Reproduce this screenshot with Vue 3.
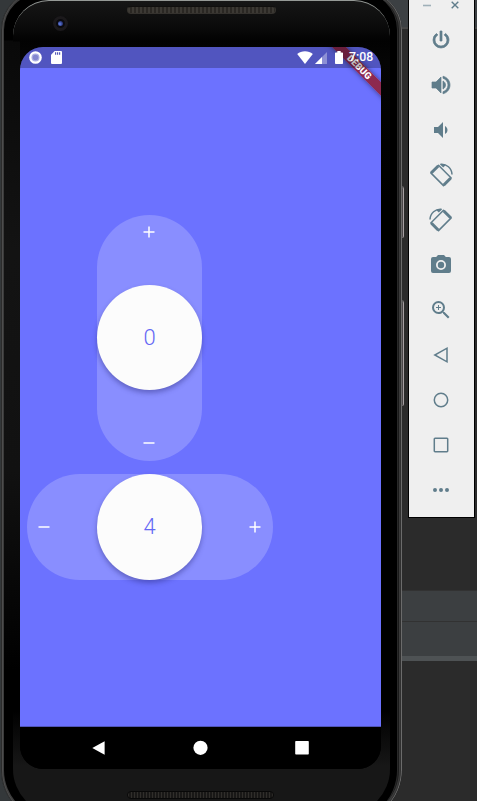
<script setup>
import { ref } from 'vue'

const vertical = ref(0)
const horizontal = ref(4)

const tools = [
  { name: 'power', d: 'M16.56 5.44l-1.45 1.45A5.97 5.97 0 0 1 18 12a6 6 0 0 1-12 0c0-2.17 1.16-4.06 2.88-5.12L7.44 5.44A7.96 7.96 0 0 0 4 12a8 8 0 0 0 16 0c0-2.72-1.36-5.12-3.44-6.56M13 3h-2v10h2z', heavy: true },
  { name: 'volume-up', d: 'M14 3.23v2.06c2.89.86 5 3.54 5 6.71s-2.11 5.84-5 6.7v2.07c4-.91 7-4.49 7-8.77s-3-7.86-7-8.77M16.5 12c0-1.77-1-3.29-2.5-4.03v8.05c1.5-.73 2.5-2.25 2.5-4.02M3 9v6h4l5 5V4L7 9H3z', heavy: true },
  { name: 'volume-down', d: 'M5 9v6h4l5 5V4L9 9H5zm13.5 3c0-1.77-1-3.29-2.5-4.03v8.05c1.5-.73 2.5-2.25 2.5-4.02z' },
  { name: 'rotate-left', turn: true },
  { name: 'rotate-right', turn: true, mirror: true },
  { name: 'camera', d: 'M9 2 7.17 4H4a2 2 0 0 0-2 2v12a2 2 0 0 0 2 2h16a2 2 0 0 0 2-2V6a2 2 0 0 0-2-2h-3.17L15 2H9zm3 5a5 5 0 1 1 0 10 5 5 0 0 1 0-10zm0 1.8a3.2 3.2 0 1 0 0 6.4 3.2 3.2 0 0 0 0-6.4z' },
  { name: 'zoom', d: 'M15.5 14h-.79l-.28-.27A6.47 6.47 0 0 0 16 9.5 6.5 6.5 0 1 0 9.5 16c1.61 0 3.09-.59 4.23-1.57l.27.28v.79l5 4.99L20.49 19l-4.99-5zm-6 0a4.5 4.5 0 1 1 0-9 4.5 4.5 0 0 1 0 9zM12 10h-2v2H9v-2H7V9h2V7h1v2h2v1z' },
  { name: 'back', line: 'M18 5.2v13.6L5.8 12z' },
  { name: 'home', line: 'M12 5.3a6.7 6.7 0 1 1 0 13.4a6.7 6.7 0 0 1 0-13.4z' },
  { name: 'overview', line: 'M6 5.3h12a.7.7 0 0 1 .7.7v12a.7.7 0 0 1-.7.7H6a.7.7 0 0 1-.7-.7V6a.7.7 0 0 1 .7-.7z' },
  { name: 'more', d: 'M6 10a2 2 0 1 0 0 4 2 2 0 0 0 0-4zm6 0a2 2 0 1 0 0 4 2 2 0 0 0 0-4zm6 0a2 2 0 1 0 0 4 2 2 0 0 0 0-4z' },
]
</script>

<template>
  <div class="desktop">
    <div class="editor">
      <div class="editor-tabs"></div>
      <div class="editor-code"></div>
      <div class="editor-pane"></div>
      <div class="editor-pane second"></div>
      <div class="editor-strip"></div>
    </div>

    <div class="phone-area">
      <div class="side-key power-key"></div>
      <div class="side-key volume-key"></div>
      <div class="phone">
        <div class="face">
          <header class="forehead">
            <span class="lens"><i></i></span>
            <span class="speaker"></span>
          </header>

          <div class="screen">
            <div class="ribbon">DEBUG</div>
            <div class="status">
              <svg class="st-circle" viewBox="0 0 14 14"><circle cx="7" cy="7" r="6.8" fill="#fff" /><circle cx="7" cy="7" r="4.3" fill="#aeb0e2" /><circle cx="7" cy="7" r="3" fill="#8487d0" /></svg>
              <svg class="st-card" viewBox="0 0 11 13"><path d="M3.7 0H10a1 1 0 0 1 1 1v11a1 1 0 0 1-1 1H1a1 1 0 0 1-1-1V3.7z" fill="#fff" /><path d="M4 1.3h1.2v2.4H4zM6 1.3h1.2v2.4H6zM8 1.3h1.2v2.4H8z" fill="#5558b8" /></svg>
              <span class="grow"></span>
              <svg class="st-wifi" viewBox="0 0 16 13"><path d="M8 13 .2 2.9C2.4 1.2 5 .3 8 .3s5.600.9 7.800 2.600z" fill="#fff" /></svg>
              <svg class="st-cell" viewBox="0 0 12 12"><path d="M12 0v12H0z" fill="#fff" opacity=".35" /><path d="M7 5v7H0z" fill="#fff" /></svg>
              <svg class="st-battery" viewBox="0 0 8 13"><path d="M2.300 0h3.400v1.400H7.200q.8 0 .8.800v10q0 .8-.8.800H.8q-.8 0-.8-.8v-10q0-.8.8-.8h1.500z" fill="#fff" /></svg>
              <span class="time">7:08</span>
            </div>

            <main class="app">
              <div class="stepper tall">
                <svg class="sign" viewBox="0 0 12 12"><path d="M.5 6h11M6 .5v11" /></svg>
                <div class="knob">{{ vertical }}</div>
                <svg class="sign" viewBox="0 0 12 12"><path d="M.5 6h11" /></svg>
              </div>
              <div class="stepper wide">
                <svg class="sign" viewBox="0 0 12 12"><path d="M.5 6h11" /></svg>
                <div class="knob">{{ horizontal }}</div>
                <svg class="sign" viewBox="0 0 12 12"><path d="M.5 6h11M6 .5v11" /></svg>
              </div>
            </main>

            <nav class="nav">
              <svg viewBox="0 0 14 14"><path d="M12.600.200v13.600L.3 7z" /></svg>
              <svg viewBox="0 0 14 14"><circle cx="6.500" cy="6.800" r="7.100" /></svg>
              <svg viewBox="0 0 14 14"><rect x=".2" width="13.600" height="13.600" rx=".8" /></svg>
            </nav>
          </div>

          <footer class="chin"><span class="speaker bottom"></span></footer>
        </div>
      </div>
    </div>

    <aside class="toolbar">
      <div class="window-buttons">
        <svg viewBox="0 0 8 8"><path d="M0 4.500h8" stroke="#9fb0b8" stroke-width="1.600" /></svg>
        <svg viewBox="0 0 8 8"><path d="M.7.7l6.600 6.600M7.300.7L.7 7.300" stroke="#607d8b" stroke-width="1.400" /></svg>
      </div>
      <div v-for="tool in tools" :key="tool.name" class="tool">
        <svg viewBox="0 0 24 24" :class="{ heavy: tool.heavy, mirror: tool.mirror }">
          <template v-if="tool.turn">
            <path class="outline" d="M9.500 2.300 22.200 15 14.500 22.600 1.800 9.900z" stroke-linejoin="round" />
            <path class="outline thick" d="M9.200 3 2.400 9.700M21.500 15.300 14.800 22" />
            <path class="outline" d="M11.500 1.300C17.500.7 22.800 5 23 11.500" />
            <path d="M10.800 1.300 15 .9 16.500 2.200 14.200 4.500z" />
          </template>
          <path v-else-if="tool.d" :d="tool.d" fill-rule="evenodd" />
          <path v-else :d="tool.line" class="outline" />
        </svg>
      </div>
    </aside>
  </div>
</template>

<style>
body {
  margin: 0;
  overflow: hidden;
}
</style>

<style scoped>
.desktop {
  display: grid;
  grid-template-columns: 402px 6px 67px 2px;
  grid-template-rows: 801px;
  width: 477px;
  height: 801px;
  overflow: hidden;
  background: #2b2b2b;
  font-family: Roboto, sans-serif;
}
.editor {
  grid-area: 1 / 1 / 2 / 5;
  display: flex;
  flex-direction: column;
}
.editor-tabs {
  height: 27px;
  background: #3c4043;
  border-bottom: 2px solid #464646;
}
.editor-code {
  height: 561px;
}
.editor-pane {
  height: 30px;
  background: #3c3f41;
  border-top: 1px solid #323232;
}
.editor-pane.second {
  height: 34px;
}
.editor-strip {
  height: 5px;
  background: #4e5254;
}
.phone-area {
  grid-area: 1 / 1 / 2 / 3;
  position: relative;
  height: 801px;
  background: linear-gradient(90deg, #34383a 20px, transparent 20px);
}
.side-key {
  position: absolute;
  left: 400px;
  width: 4px;
  box-sizing: border-box;
  background: #4a4648;
  border-right: 1px solid #a59fa1;
  border-top: 3px solid #555;
  border-radius: 0 2px 2px 0;
}
.power-key {
  top: 186px;
  height: 52px;
}
.volume-key {
  top: 300px;
  height: 106px;
}
.phone {
  position: relative;
  box-sizing: border-box;
  width: 401px;
  height: 831px;
  margin: -9px 0 0 1px;
  padding: 9px 12px 0;
  border-radius: 39px 39px 52px 52px;
  background:
    linear-gradient(transparent 49px, #090909 50px, #131313 260px, #111 480px, #000 680px) 0 0 / 12px 100% no-repeat,
    #000;
  box-shadow: inset -1px 0 0 #6b6b6b, inset 1px 0 0 #2c2c2c, inset -2px 0 0 #303030, inset 2px 0 0 #4d4d4d, inset 0 0 0 3px #3b3b3b, inset -4px 0 0 #1b1b1b, inset -5px 0 0 #292929;
}
.face {
  box-sizing: border-box;
  height: 815px;
  border-radius: 36px 36px 46px 46px;
  border-top: 1px solid #969a97;
  background:
    linear-gradient(transparent 40px, #090909 41px, #131313 250px, #111 470px, transparent 670px) 0 0 / 7px 100% no-repeat,
    linear-gradient(#161616, #0b0b0b 25px, #020202 40px, #050505 60px, #000 200px, #000 710px, #171717 765px);
}
.forehead {
  display: flex;
  height: 46px;
}
.lens {
  display: flex;
  align-items: center;
  justify-content: center;
  width: 15px;
  height: 15px;
  margin: 15px 0 0 40px;
  border-radius: 50%;
  background: #0a0a0e;
  box-shadow: inset 0 0 0 3px #1b191b;
}
.lens i {
  width: 5px;
  height: 5px;
  border-radius: 50%;
  background: radial-gradient(circle at 35% 60%, #6684e8, #293579 65%, #101529);
}
.speaker {
  box-sizing: border-box;
  width: 149px;
  height: 8px;
  margin: 5px 0 0 59px;
  border: 1px solid #35322e;
  border-top-color: #100f0e;
  border-radius: 4px;
  background: repeating-linear-gradient(90deg, #3c3934 0 2px, #2a2723 2px 4px);
}
.speaker.bottom {
  width: 147px;
  margin: 0 3px 0 0;
  border-color: #080808;
  background: repeating-linear-gradient(90deg, #302e2b 0 1px, #191817 1px 3px);
}
.screen {
  position: relative;
  display: flex;
  flex-direction: column;
  width: 361px;
  height: 722px;
  margin-left: 7px;
  overflow: hidden;
  border-radius: 23px;
  background: linear-gradient(#6c72ff 680px, #000 680px);
}
.ribbon {
  position: absolute;
  top: 15.500px;
  left: 290px;
  width: 100px;
  height: 10px;
  box-sizing: border-box;
  padding-right: 2px;
  transform: rotate(45deg);
  background: rgba(150, 22, 35, 0.8);
  box-shadow: 0 0 5px rgba(0, 0, 0, 0.5);
  color: #fff;
  font-size: 9.400px;
  font-weight: 900;
  line-height: 10.500px;
  text-align: center;
}
.status {
  position: relative;
  display: flex;
  align-items: center;
  flex: none;
  box-sizing: border-box;
  height: 21px;
  padding: 0 7px 0 9px;
  background: rgba(0, 0, 0, 0.25);
}
.st-circle {
  width: 13px;
  height: 13px;
}
.st-card {
  width: 11px;
  height: 13px;
  margin-left: 9px;
}
.grow {
  flex: 1;
}
.st-wifi {
  width: 16px;
  height: 13px;
}
.st-cell {
  width: 12px;
  height: 12px;
  margin: 1px 0 0 2px;
}
.st-battery {
  width: 8px;
  height: 13px;
  margin-left: 8px;
}
.time {
  width: 25px;
  margin-left: 6px;
  color: #fff;
  font-size: 12.300px;
  font-weight: 500;
  line-height: 21px;
  white-space: nowrap;
}
.app {
  display: flex;
  flex: 1;
  flex-direction: column;
  align-items: center;
  gap: 13.800px;
  box-sizing: border-box;
  width: 259px;
  padding-top: 146.600px;
}
.stepper {
  display: flex;
  align-items: center;
  justify-content: space-between;
  box-sizing: border-box;
  border-radius: 53px;
  background: rgba(255, 255, 255, 0.2);
}
.tall {
  flex-direction: column;
  width: 105.400px;
  height: 246px;
  padding: 11.600px 0;
}
.wide {
  width: 246px;
  height: 105.400px;
  padding: 0 11.600px;
}
.sign {
  width: 12px;
  height: 12px;
  stroke: #fff;
  stroke-width: 1.500;
}
.knob {
  width: 105.400px;
  height: 105.400px;
  border-radius: 50%;
  background: #fcfcfc;
  box-shadow: 0 3px 5px rgba(35, 35, 110, 0.4);
  color: #6468f5;
  font-size: 22px;
  font-weight: 300;
  line-height: 106px;
  text-align: center;
}
.nav {
  display: flex;
  align-items: center;
  justify-content: center;
  gap: 87.500px;
  flex: none;
  box-sizing: border-box;
  height: 43px;
  border-top: 1px solid #5055b8;
  background: #000;
}
.nav svg {
  width: 14px;
  height: 14px;
  overflow: visible;
  fill: #fff;
}
.chin {
  display: flex;
  justify-content: center;
  padding: 22px 0 0;
}
.toolbar {
  grid-area: 1 / 3 / 2 / 4;
  position: relative;
  box-sizing: border-box;
  height: 518px;
  border: 1px solid #000;
  border-top: 0;
  background: #efefef;
}
.window-buttons {
  display: flex;
  gap: 20px;
  height: 17px;
  padding: 1px 0 0 14px;
  box-sizing: border-box;
}
.window-buttons svg {
  width: 8px;
  height: 8px;
}
.tool {
  display: flex;
  align-items: center;
  height: 45px;
  padding-left: 20px;
}
.tool svg {
  width: 24px;
  height: 24px;
  overflow: visible;
  fill: #607d8b;
}
.tool .outline {
  fill: none;
  stroke: #607d8b;
  stroke-width: 1.500;
}
.tool .thick {
  stroke-width: 3;
}
.heavy {
  stroke: #607d8b;
  stroke-width: 0.700;
}
.mirror {
  transform: scaleX(-1);
}
</style>
